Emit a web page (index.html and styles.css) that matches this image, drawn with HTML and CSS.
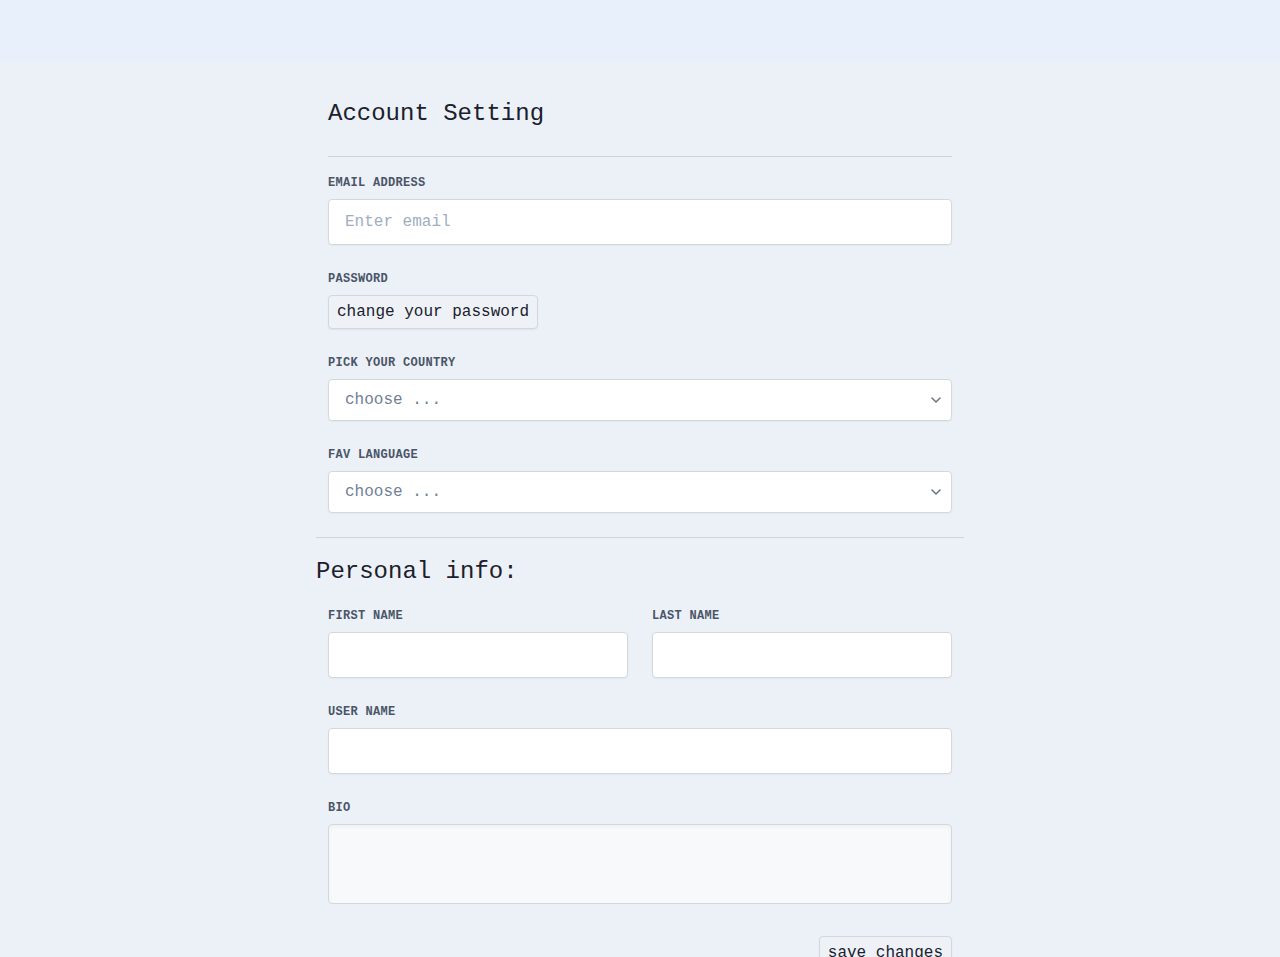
FILE: index.html
```html
<!DOCTYPE html>
<html lang="en">
<head>
<meta charset="utf-8">
<title>Account Setting</title>
<link rel="stylesheet" href="styles.css">
</head>
<body>
<header class="topbar"></header>
<main class="page">
  <section class="section">
    <h1 class="title">Account Setting</h1>
    <hr class="rule">
    <div class="field">
      <label class="label">Email address</label>
      <input class="input" type="text" placeholder="Enter email">
    </div>
    <div class="field">
      <label class="label">Password</label>
      <div><button class="btn" type="button">change your password</button></div>
    </div>
    <div class="field">
      <label class="label">Pick your country</label>
      <div class="select"><span>choose ...</span>
        <svg class="chev" width="10" height="6" viewBox="0 0 10 6"><path d="M1 1l4 4 4-4" fill="none" stroke="#6b7280" stroke-width="1.5" stroke-linecap="round" stroke-linejoin="round"/></svg>
      </div>
    </div>
    <div class="field">
      <label class="label">Fav language</label>
      <div class="select"><span>choose ...</span>
        <svg class="chev" width="10" height="6" viewBox="0 0 10 6"><path d="M1 1l4 4 4-4" fill="none" stroke="#6b7280" stroke-width="1.5" stroke-linecap="round" stroke-linejoin="round"/></svg>
      </div>
    </div>
  </section>
  <hr class="rule wide">
  <h2 class="subtitle">Personal info:</h2>
  <section class="section">
    <div class="row">
      <div class="field">
        <label class="label">First name</label>
        <input class="input" type="text">
      </div>
      <div class="field">
        <label class="label">Last name</label>
        <input class="input" type="text">
      </div>
    </div>
    <div class="field">
      <label class="label">User name</label>
      <input class="input" type="text">
    </div>
    <div class="field">
      <label class="label">Bio</label>
      <textarea class="textarea"></textarea>
    </div>
    <div class="actions">
      <button class="btn" type="button">save changes</button>
    </div>
  </section>
</main>
</body>
</html>
```
FILE: styles.css
```css
* { box-sizing: border-box; }
html, body { margin: 0; padding: 0; }
body {
  background: #ecf1f7;
  font-family: "Liberation Mono", "Courier New", monospace;
  color: #1a202c;
}
.topbar {
  height: 62px;
  background: #e8f1fb;
}
.page {
  width: 648px;
  margin: 0 auto;
  padding-top: 36px;
}
.section {
  padding: 0 12px;
}
.title {
  margin: 0;
  font-size: 24px;
  line-height: 32px;
  font-weight: normal;
}
.rule {
  border: 0;
  border-top: 1px solid #cfd4db;
  margin: 26px 0 14px;
  height: 0;
}
.rule.wide {
  margin: 24px 0 18px;
}
.subtitle {
  margin: 0 0 16px;
  font-size: 24px;
  line-height: 32px;
  font-weight: normal;
}
.field {
  display: flex;
  flex-direction: column;
  margin-bottom: 22px;
}
.label {
  display: block;
  font-size: 12px;
  line-height: 20px;
  font-weight: bold;
  text-transform: uppercase;
  letter-spacing: 0.025em;
  color: #4a5568;
  padding-top: 2px;
  margin-bottom: 6px;
}
.input {
  height: 46px;
  width: 100%;
  background: #fff;
  border: 1px solid #d3d8df;
  border-radius: 4px;
  padding: 0 16px;
  font-family: inherit;
  font-size: 16px;
  color: #1a202c;
  box-shadow: 0 1px 2px rgba(0,0,0,0.04);
  outline: none;
}
.input::placeholder { color: #a0aec0; }
.select {
  height: 42px;
  display: flex;
  align-items: center;
  justify-content: space-between;
  background: #fff;
  border: 1px solid #d3d8df;
  border-radius: 4px;
  padding: 0 10px 0 16px;
  font-size: 16px;
  color: #718096;
  box-shadow: 0 1px 2px rgba(0,0,0,0.04);
}
.chev { display: block; }
.btn {
  font-family: inherit;
  font-size: 16px;
  line-height: 20px;
  color: #1a202c;
  background: #eef2f7;
  border: 1px solid #d3d8df;
  border-radius: 4px;
  padding: 6px 8px;
  box-shadow: 0 1px 2px rgba(0,0,0,0.06);
  cursor: pointer;
}
.row {
  display: grid;
  grid-template-columns: 1fr 1fr;
  column-gap: 24px;
}
.textarea {
  display: block;
  width: 100%;
  height: 80px;
  resize: none;
  background: #f7f9fb;
  border: 1px solid #d3d8df;
  border-radius: 4px;
  box-shadow: inset 0 2px 4px rgba(0,0,0,0.04);
  font-family: inherit;
  font-size: 16px;
  padding: 8px 16px;
  outline: none;
}
.actions {
  display: flex;
  justify-content: flex-end;
  padding-top: 10px;
  padding-bottom: 24px;
}
```
